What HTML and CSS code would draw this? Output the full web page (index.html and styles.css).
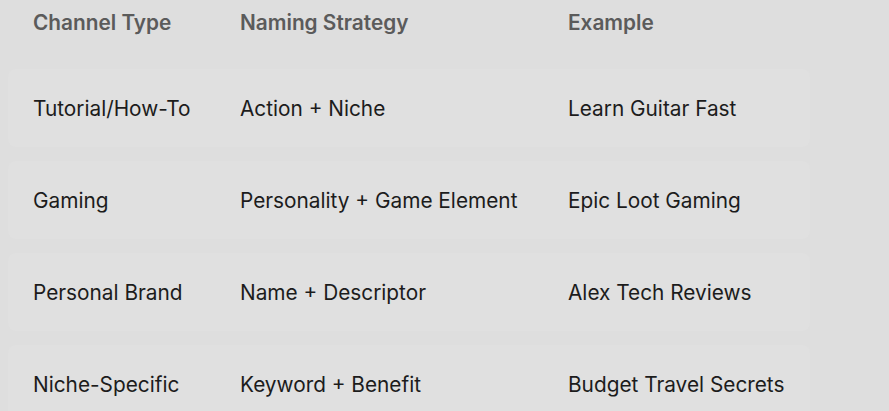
FILE: index.html
```html
<!DOCTYPE html>
<html>
<head>
<meta charset="utf-8">
<link rel="stylesheet" href="styles.css">
</head>
<body>
<div class="table">
  <div class="row head">
    <div class="cell c1">Channel Type</div>
    <div class="cell c2">Naming Strategy</div>
    <div class="cell c3">Example</div>
  </div>
  <div class="body">
    <div class="row item">
      <div class="cell c1">Tutorial/How-To</div>
      <div class="cell c2">Action + Niche</div>
      <div class="cell c3">Learn Guitar Fast</div>
    </div>
    <div class="row item">
      <div class="cell c1">Gaming</div>
      <div class="cell c2">Personality + Game Element</div>
      <div class="cell c3">Epic Loot Gaming</div>
    </div>
    <div class="row item">
      <div class="cell c1">Personal Brand</div>
      <div class="cell c2">Name + Descriptor</div>
      <div class="cell c3">Alex Tech Reviews</div>
    </div>
    <div class="row item">
      <div class="cell c1">Niche-Specific</div>
      <div class="cell c2">Keyword + Benefit</div>
      <div class="cell c3">Budget Travel Secrets</div>
    </div>
  </div>
</div>
</body>
</html>
```
FILE: styles.css
```css
html, body {
  margin: 0;
  padding: 0;
  background: #dedede;
  font-family: Inter, "Noto Sans", sans-serif;
  overflow: hidden;
}
.table {
  width: 802px;
  margin-left: 8px;
}
.row {
  display: flex;
  align-items: center;
}
.cell {
  padding-left: 25px;
  box-sizing: border-box;
  font-size: 20.8px;
  white-space: nowrap;
}
.c1 { width: 207px; }
.c2 { width: 328px; }
.c3 { width: 267px; }
.head {
  height: 45px;
  margin-bottom: 24px;
}
.head .cell {
  color: #5b5b5b;
  font-weight: 600;
}
.body {
  display: flex;
  flex-direction: column;
  gap: 14px;
}
.item {
  height: 78px;
  background: #e0e0e0;
  border-radius: 8px;
}
.item .cell {
  color: #1c1c1c;
  padding-top: 1px;
}
```
